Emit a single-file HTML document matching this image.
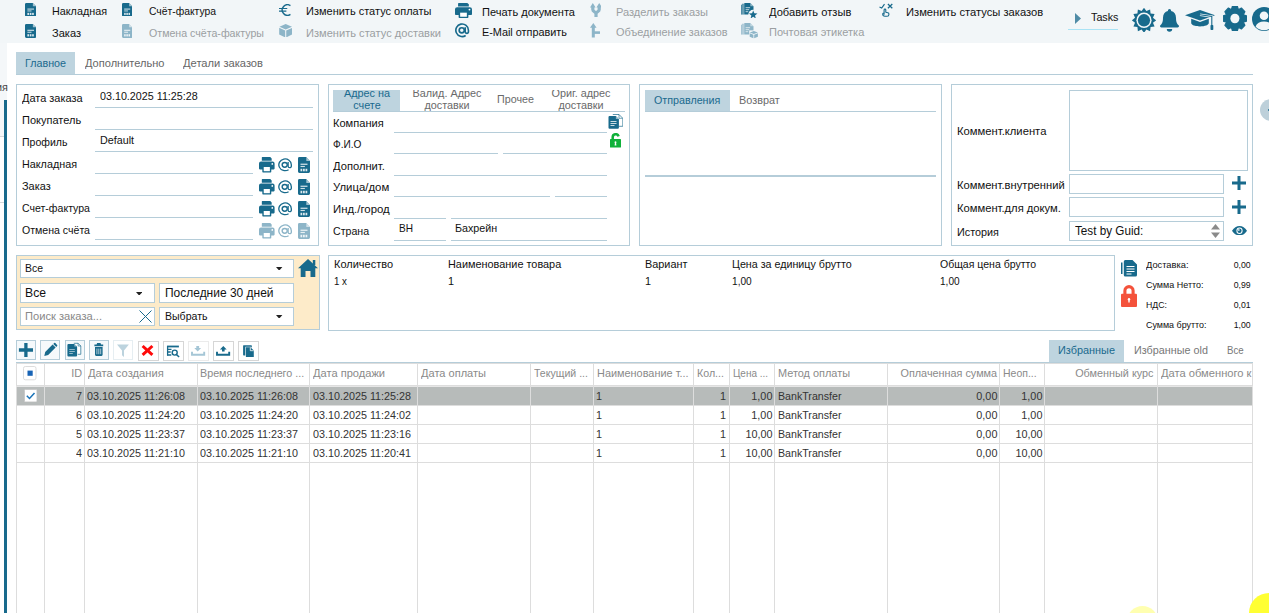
<!DOCTYPE html><html lang="ru"><head><meta charset="utf-8"><title>Заказы</title><style>
html,body{margin:0;padding:0}
body{width:1269px;height:613px;overflow:hidden;position:relative;background:#fff;font-family:"Liberation Sans",sans-serif;}
.b{position:absolute;box-sizing:border-box}
.t{position:absolute;white-space:nowrap;line-height:16px;height:16px}
.l{transform-origin:0 50%}
.r{transform-origin:100% 50%}
.c{transform-origin:50% 50%}

</style></head><body>
<div class="b" style="left:0px;top:0px;width:1269px;height:43px;background:#f2f6f8"></div>
<div class="b" style="left:0px;top:43px;width:7px;height:93px;background:#f4f7f9"></div>
<div class="b" style="left:4px;top:100px;width:3px;height:513px;background:#186a8c"></div>
<div class="b" style="left:0px;top:136px;width:4px;height:1px;background:#d4d8da"></div>
<div class="b" style="left:0px;top:202px;width:4px;height:1px;background:#d4d8da"></div>
<div class="b" style="left:1068px;top:29px;width:50px;height:1px;background:#a9e3f5"></div>
<div class="b" style="left:16px;top:52px;width:59px;height:22px;background:#bed4df"></div>
<div class="b" style="left:16px;top:74px;width:1237px;height:1px;background:#b5cdd9"></div>
<div class="b" style="left:16px;top:84px;width:303px;height:162px;border:1px solid #b5cdd9"></div>
<div class="b" style="left:95px;top:107px;width:218px;height:1px;background:#b5cdd9"></div>
<div class="b" style="left:95px;top:129px;width:218px;height:1px;background:#b5cdd9"></div>
<div class="b" style="left:95px;top:151px;width:218px;height:1px;background:#b5cdd9"></div>
<div class="b" style="left:95px;top:173px;width:157.5px;height:1px;background:#b5cdd9"></div>
<div class="b" style="left:95px;top:195px;width:157.5px;height:1px;background:#b5cdd9"></div>
<div class="b" style="left:95px;top:217px;width:157.5px;height:1px;background:#b5cdd9"></div>
<div class="b" style="left:95px;top:239px;width:157.5px;height:1px;background:#b5cdd9"></div>
<div class="b" style="left:328px;top:84px;width:302px;height:162px;border:1px solid #b5cdd9"></div>
<div class="b" style="left:333px;top:90px;width:67px;height:21px;background:#bed4df"></div>
<div class="b" style="left:333px;top:111px;width:291.5px;height:1px;background:#b5cdd9"></div>
<div class="b" style="left:333px;top:85px;width:292px;height:5px;background:#fff;z-index:5"></div>
<div class="b" style="left:394px;top:132px;width:212.5px;height:1px;background:#b5cdd9"></div>
<div class="b" style="left:394px;top:153px;width:103.5px;height:1px;background:#b5cdd9"></div>
<div class="b" style="left:503px;top:153px;width:103.5px;height:1px;background:#b5cdd9"></div>
<div class="b" style="left:394px;top:175px;width:212.5px;height:1px;background:#b5cdd9"></div>
<div class="b" style="left:394px;top:196px;width:155.6px;height:1px;background:#b5cdd9"></div>
<div class="b" style="left:555px;top:196px;width:51.5px;height:1px;background:#b5cdd9"></div>
<div class="b" style="left:394px;top:218px;width:51.6px;height:1px;background:#b5cdd9"></div>
<div class="b" style="left:451px;top:218px;width:155.5px;height:1px;background:#b5cdd9"></div>
<div class="b" style="left:394px;top:240px;width:51.6px;height:1px;background:#b5cdd9"></div>
<div class="b" style="left:451px;top:240px;width:155.5px;height:1px;background:#b5cdd9"></div>
<div class="b" style="left:639px;top:84px;width:303px;height:162px;border:1px solid #b5cdd9"></div>
<div class="b" style="left:645px;top:90px;width:85px;height:21px;background:#bed4df"></div>
<div class="b" style="left:645px;top:111px;width:291px;height:1px;background:#b5cdd9"></div>
<div class="b" style="left:645px;top:175px;width:291px;height:2px;background:#b5cdd9"></div>
<div class="b" style="left:951px;top:84px;width:302px;height:162px;border:1px solid #b5cdd9"></div>
<div class="b" style="left:1069px;top:90px;width:179px;height:81px;border:1px solid #b5cdd9;background:#fff"></div>
<div class="b" style="left:1069px;top:174px;width:155px;height:19.5px;border:1px solid #b5cdd9;background:#fff"></div>
<div class="b" style="left:1069px;top:197px;width:155px;height:19.5px;border:1px solid #b5cdd9;background:#fff"></div>
<div class="b" style="left:1069px;top:221px;width:155px;height:19.5px;border:1px solid #b5cdd9;background:#fff"></div>
<div class="b" style="left:1260px;top:99px;width:22px;height:22px;background:#bdd0da;border-radius:11px"></div>
<div class="b" style="left:16px;top:255px;width:304px;height:75px;background:#fdebc9;border:1px solid #b5cdd9"></div>
<div class="b" style="left:20px;top:259px;width:274px;height:19px;border:1px solid #b5cdd9;background:#fff"></div>
<div class="b" style="left:20px;top:283px;width:135px;height:19.5px;border:1px solid #b5cdd9;background:#fff"></div>
<div class="b" style="left:159px;top:283px;width:135px;height:19.5px;border:1px solid #b5cdd9;background:#fff"></div>
<div class="b" style="left:20px;top:306.5px;width:135px;height:19px;border:1px solid #b5cdd9;background:#fff"></div>
<div class="b" style="left:159px;top:306.5px;width:135px;height:19px;border:1px solid #b5cdd9;background:#fff"></div>
<div class="b" style="left:328px;top:255px;width:787px;height:75.5px;border:1px solid #b5cdd9"></div>
<div class="b" style="left:1049px;top:340px;width:75px;height:22px;background:#bed4df"></div>
<div class="b" style="left:16px;top:362px;width:1237px;height:1px;background:#b5cdd9"></div>
<div class="b" style="left:16px;top:340px;width:20px;height:20px;border:1px solid #b5cdd9;background:#f5f9fb"></div>
<div class="b" style="left:40px;top:340px;width:20px;height:20px;border:1px solid #b5cdd9;background:#f5f9fb"></div>
<div class="b" style="left:65px;top:340px;width:20px;height:20px;border:1px solid #b5cdd9;background:#f5f9fb"></div>
<div class="b" style="left:89px;top:340px;width:20px;height:20px;border:1px solid #b5cdd9;background:#f5f9fb"></div>
<div class="b" style="left:113px;top:340px;width:20px;height:20px;border:1px solid #e6eef2;background:#fff"></div>
<div class="b" style="left:138px;top:341px;width:20.5px;height:19.5px;border:1px solid #d6d6d6;background:#fff"></div>
<div class="b" style="left:163px;top:341px;width:20.5px;height:19.5px;border:1px solid #d6d6d6;background:#fff"></div>
<div class="b" style="left:188px;top:341px;width:20.5px;height:19.5px;border:1px solid #ebebeb;background:#fff"></div>
<div class="b" style="left:213px;top:341px;width:20.5px;height:19.5px;border:1px solid #d6d6d6;background:#fff"></div>
<div class="b" style="left:238px;top:341px;width:20.5px;height:19.5px;border:1px solid #d6d6d6;background:#fff"></div>
<div class="b" style="left:16px;top:363px;width:1237px;height:250px;border-left:1px solid #dddddd;border-right:1px solid #dddddd;border-top:1px solid #dddddd"></div>
<div class="b" style="left:16px;top:385px;width:1237px;height:1px;background:#dddddd"></div>
<div class="b" style="left:16px;top:386px;width:1237px;height:1px;background:#e6e6e6"></div>
<div class="b" style="left:17px;top:387px;width:1235px;height:18px;background:#b7bbba"></div>
<div class="b" style="left:16px;top:405px;width:1237px;height:1px;background:#dddddd"></div>
<div class="b" style="left:16px;top:424px;width:1237px;height:1px;background:#dddddd"></div>
<div class="b" style="left:16px;top:443px;width:1237px;height:1px;background:#dddddd"></div>
<div class="b" style="left:16px;top:462px;width:1237px;height:1px;background:#dddddd"></div>
<div class="b" style="left:44px;top:364px;width:1px;height:249px;background:#dddddd"></div>
<div class="b" style="left:84px;top:364px;width:1px;height:249px;background:#dddddd"></div>
<div class="b" style="left:197px;top:364px;width:1px;height:249px;background:#dddddd"></div>
<div class="b" style="left:309px;top:364px;width:1px;height:249px;background:#dddddd"></div>
<div class="b" style="left:417px;top:364px;width:1px;height:249px;background:#dddddd"></div>
<div class="b" style="left:530px;top:364px;width:1px;height:249px;background:#dddddd"></div>
<div class="b" style="left:593px;top:364px;width:1px;height:249px;background:#dddddd"></div>
<div class="b" style="left:693px;top:364px;width:1px;height:249px;background:#dddddd"></div>
<div class="b" style="left:729px;top:364px;width:1px;height:249px;background:#dddddd"></div>
<div class="b" style="left:774px;top:364px;width:1px;height:249px;background:#dddddd"></div>
<div class="b" style="left:887px;top:364px;width:1px;height:249px;background:#dddddd"></div>
<div class="b" style="left:999px;top:364px;width:1px;height:249px;background:#dddddd"></div>
<div class="b" style="left:1044px;top:364px;width:1px;height:249px;background:#dddddd"></div>
<div class="b" style="left:1157px;top:364px;width:1px;height:249px;background:#dddddd"></div>
<div class="b" style="left:1160px;top:365px;width:92px;height:19px;overflow:hidden"></div>
<div class="b" style="left:1249px;top:593px;width:40px;height:40px;background:#ffff33;border-radius:50%"></div>
<div class="b" style="left:1126.5px;top:605.5px;width:31px;height:31px;background:#ffffb0;border-radius:50%"></div>
<svg class="b" style="left:24.8px;top:2.8px" width="11.4" height="13.4" viewBox="0 0 11 14" preserveAspectRatio="none"><path d="M1.3 0h6.3l3.4 3.4v9.3a1.3 1.3 0 0 1-1.3 1.3h-8.4a1.3 1.3 0 0 1-1.3-1.3v-11.4a1.3 1.3 0 0 1 1.3-1.3z" fill="#186a8c"/><path d="M7.6 0v3.4h3.4z" fill="#fff" opacity=".6"/><rect x="2.3" y="5.8" width="6.4" height="1.1" fill="#fff" opacity=".8"/><rect x="2.3" y="7.8" width="4" height="1" fill="#fff" opacity=".8"/><rect x="2.3" y="10.3" width="1.6" height="2.2" fill="#fff" opacity=".85"/><rect x="4.6" y="10.3" width="1.6" height="2.2" fill="#fff" opacity=".85"/><rect x="6.9" y="10.3" width="1.6" height="2.2" fill="#fff" opacity=".85"/></svg>
<svg class="b" style="left:24.8px;top:23.8px" width="11.4" height="13.9" viewBox="0 0 11 14" preserveAspectRatio="none"><path d="M1.3 0h6.3l3.4 3.4v9.3a1.3 1.3 0 0 1-1.3 1.3h-8.4a1.3 1.3 0 0 1-1.3-1.3v-11.4a1.3 1.3 0 0 1 1.3-1.3z" fill="#186a8c"/><path d="M7.6 0v3.4h3.4z" fill="#fff" opacity=".6"/><rect x="2.3" y="5.8" width="6.4" height="1.1" fill="#fff" opacity=".8"/><rect x="2.3" y="7.8" width="4" height="1" fill="#fff" opacity=".8"/><rect x="2.3" y="10.3" width="1.6" height="2.2" fill="#fff" opacity=".85"/><rect x="4.6" y="10.3" width="1.6" height="2.2" fill="#fff" opacity=".85"/><rect x="6.9" y="10.3" width="1.6" height="2.2" fill="#fff" opacity=".85"/></svg>
<svg class="b" style="left:122px;top:2.8px" width="10.4" height="13.4" viewBox="0 0 11 14" preserveAspectRatio="none"><path d="M1.3 0h6.3l3.4 3.4v9.3a1.3 1.3 0 0 1-1.3 1.3h-8.4a1.3 1.3 0 0 1-1.3-1.3v-11.4a1.3 1.3 0 0 1 1.3-1.3z" fill="#186a8c"/><path d="M7.6 0v3.4h3.4z" fill="#fff" opacity=".6"/><rect x="2.3" y="5.8" width="6.4" height="1.1" fill="#fff" opacity=".8"/><rect x="2.3" y="7.8" width="4" height="1" fill="#fff" opacity=".8"/><rect x="2.3" y="10.3" width="1.6" height="2.2" fill="#fff" opacity=".85"/><rect x="4.6" y="10.3" width="1.6" height="2.2" fill="#fff" opacity=".85"/><rect x="6.9" y="10.3" width="1.6" height="2.2" fill="#fff" opacity=".85"/></svg>
<svg class="b" style="left:122px;top:23.8px" width="10.4" height="13.9" viewBox="0 0 11 14" preserveAspectRatio="none"><path d="M1.3 0h6.3l3.4 3.4v9.3a1.3 1.3 0 0 1-1.3 1.3h-8.4a1.3 1.3 0 0 1-1.3-1.3v-11.4a1.3 1.3 0 0 1 1.3-1.3z" fill="#8db5c8"/><path d="M7.6 0v3.4h3.4z" fill="#fff" opacity=".6"/><rect x="2.3" y="5.8" width="6.4" height="1.1" fill="#fff" opacity=".8"/><rect x="2.3" y="7.8" width="4" height="1" fill="#fff" opacity=".8"/><rect x="2.3" y="10.3" width="1.6" height="2.2" fill="#fff" opacity=".85"/><rect x="4.6" y="10.3" width="1.6" height="2.2" fill="#fff" opacity=".85"/><rect x="6.9" y="10.3" width="1.6" height="2.2" fill="#fff" opacity=".85"/></svg>
<svg class="b" style="left:279px;top:4px" width="13" height="12" viewBox="0 0 15 14" preserveAspectRatio="none"><path d="M13.2 1.9A6.1 6.1 0 1 0 13.2 12.1" stroke="#186a8c" stroke-width="1.6" fill="none"/><path d="M0 5.3h9.5M0 8.3h8.5" stroke="#186a8c" stroke-width="1.3"/></svg>
<svg class="b" style="left:279px;top:24px" width="13.4" height="13.4" viewBox="0 0 15 14" preserveAspectRatio="none"><path d="M7.5 0L14.5 2.8L7.5 5.8L0.5 2.8z" fill="#8db5c8"/><path d="M0.2 4L6.9 6.9V14L0.2 11z" fill="#8db5c8"/><path d="M14.8 4L8.1 6.9V14L14.8 11z" fill="#8db5c8"/></svg>
<svg class="b" style="left:454.5px;top:3px" width="17" height="15" viewBox="0 0 15.5 15.5" preserveAspectRatio="none"><path d="M3.300 0h7.900l1.400 1.400v2.300h-9.800v-3.200a.5.5 0 0 1 .5-.5z" fill="#186a8c"/><path d="M2 4.400h11.500a2 2 0 0 1 2 2v5.200a.8.800 0 0 1-.8.800h-13.900a.8.800 0 0 1-.8-.8v-5.200a2 2 0 0 1 2-2z" fill="#186a8c"/><rect x="3.300" y="8.800" width="8.900" height="6.700" rx=".7" fill="#186a8c"/><rect x="4.700" y="10" width="6.100" height="4.200" fill="#fff"/><circle cx="13.200" cy="6.900" r=".85" fill="#fff"/></svg>
<svg class="b" style="left:455.3px;top:23.450000000000003px" width="14.3" height="14.3" viewBox="0 0 15 15" preserveAspectRatio="none"><circle cx="7.100" cy="7.700" r="2.700" stroke="#186a8c" stroke-width="1.8" fill="none"/><path d="M10.700 4.500v4.700a1.700 1.700 0 0 0 3.400 0v-1.700a6.600 6.600 0 1 0 -2.900 5.600" stroke="#186a8c" stroke-width="1.7" fill="none"/></svg>
<svg class="b" style="left:589.6px;top:3px" width="11.8" height="14.5" viewBox="0 0 11.8 14.5" ><path d="M2.8 4v2.500c0 2.300 3.200 2.300 3.200 4.500v3M9.200 4v2.500c0 2.300-3.200 2.300-3.200 4.500" stroke="#8db5c8" stroke-width="3.200" fill="none"/><path d="M2.800 0l2.800 4.400h-5.600zM9.200 0l2.800 4.400h-5.600z" fill="#8db5c8"/></svg>
<svg class="b" style="left:589.5px;top:23.2px" width="10.5" height="14.5" viewBox="0 0 10.5 14.5" ><path d="M3.300 4v10.500" stroke="#8db5c8" stroke-width="3" fill="none"/><path d="M3.300 9.600h7" stroke="#8db5c8" stroke-width="2.600" fill="none"/><path d="M3.300 0l3.300 4.800h-6.600z" fill="#8db5c8"/></svg>
<svg class="b" style="left:741px;top:3.1px" width="16.5" height="15" viewBox="0 0 16.5 15" ><rect x="0" y="1.700" width=".75" height="9.900" fill="#186a8c"/><rect x="1.350" y=".7" width="1.250" height="10.900" fill="#186a8c"/><path d="M3.800 0h5.500l3.200 3.200v8.400h-9.300v-11a.6.600 0 0 1 .6-.6z" fill="#186a8c"/><path d="M9.300 0v3.200h3.200z" fill="#f2f6f8" opacity=".55"/><path d="M4.600 4.700h4.500M4.600 6.700h3.600M4.600 8.700h2.600" stroke="#f2f6f8" stroke-width=".9" opacity=".85"/><circle cx="12.200" cy="11.700" r="4.900" fill="#f2f6f8"/><polygon points="12.20,7.40 13.32,10.36 16.48,10.51 14.01,12.49 14.85,15.54 12.20,13.80 9.55,15.54 10.39,12.49 7.92,10.51 11.08,10.36" fill="#186a8c"/></svg>
<svg class="b" style="left:741px;top:23.2px" width="17.2" height="15.5" viewBox="0 0 17.2 15.5" ><rect x="0" y="1.700" width=".75" height="9.900" fill="#8db5c8"/><rect x="1.350" y=".7" width="1.250" height="10.900" fill="#8db5c8"/><path d="M3.800 0h5.500l3.200 3.200v8.400h-9.300v-11a.6.600 0 0 1 .6-.6z" fill="#8db5c8"/><path d="M9.300 0v3.200h3.200z" fill="#f2f6f8" opacity=".55"/><path d="M4.600 4.700h4.500M4.600 6.700h3.600M4.600 8.700h2.600" stroke="#f2f6f8" stroke-width=".9" opacity=".85"/><rect x="8.200" y="7.400" width="9" height="8.100" fill="#f2f6f8"/><path d="M12.800 8l4.100 1.500-4.100 1.600-4.100-1.600z" fill="#8db5c8"/><path d="M8.700 10.300l3.700 1.500v3.500l-3.700-1.600zM16.900 10.300l-3.700 1.500v3.500l3.700-1.600z" fill="#8db5c8"/></svg>
<svg class="b" style="left:878.5px;top:2.5px" width="15" height="15" viewBox="0 0 15 15" ><path d="M.5 4l2.200 1 2.800-3.900" stroke="#186a8c" stroke-width="1.200" fill="none"/><path d="M8.900 1l4.400 4.300M13.300 1l-4.400 4.300" stroke="#186a8c" stroke-width="1.250"/><path d="M5.100 11.200v-4.300a.85.850 0 0 1 1.700 0v2.400l2.100.4a1.200 1.200 0 0 1 1 1.200v.6a1.800 1.800 0 0 1-1.800 1.800h-2.200a2.200 2.200 0 0 1-2.200-2.200c0-.9.700-1.100 1.400-.4z" stroke="#186a8c" stroke-width="1.100" fill="none" stroke-linejoin="round"/></svg>
<svg class="b" style="left:1075px;top:12.5px" width="6" height="11" viewBox="0 0 6 11" ><path d="M0 0L6 5.5L0 11z" fill="#4f8ba6"/></svg>
<svg class="b" style="left:1131.5px;top:7.7px" width="24" height="24.6" viewBox="0 0 24 24" preserveAspectRatio="none"><polygon points="12.00,-0.20 14.41,3.02 18.10,1.43 18.58,5.42 22.57,5.90 20.98,9.59 24.20,12.00 20.98,14.41 22.57,18.10 18.58,18.58 18.10,22.57 14.41,20.98 12.00,24.20 9.59,20.98 5.90,22.57 5.42,18.58 1.43,18.10 3.02,14.41 -0.20,12.00 3.02,9.59 1.43,5.90 5.42,5.42 5.90,1.43 9.59,3.02" fill="#186a8c"/><circle cx="12" cy="12" r="7.6" fill="#f2f6f8"/><circle cx="12" cy="12" r="6.100" fill="#186a8c"/></svg>
<svg class="b" style="left:1160px;top:8.5px" width="19" height="23" viewBox="0 0 19 23" ><path d="M9.5 0a1.6 1.6 0 0 1 1.6 1.6v.5c3 .7 4.9 3.3 4.9 6.6 0 4.5 1.2 6.2 2.6 7.5.3.3.4.6.4.9 0 .7-.5 1.3-1.4 1.3h-16.2c-.9 0-1.400-.6-1.400-1.300 0-.3.1-.6.4-.9 1.400-1.300 2.600-3 2.600-7.500 0-3.300 1.900-5.900 4.900-6.600v-.5a1.600 1.600 0 0 1 1.600-1.600z" fill="#186a8c"/><path d="M6.800 20h5.400a2.700 2.700 0 0 1-5.400 0z" fill="#186a8c"/></svg>
<svg class="b" style="left:1185px;top:10px" width="30" height="21" viewBox="0 0 30 21" ><path d="M15 0L30 5.2L15 10.6L0 5.200z" fill="#186a8c"/><path d="M6.200 8.800l8.800 3.200 8.800-3.200v4.200c0 1.900-3.900 3.400-8.800 3.400s-8.800-1.500-8.800-3.400z" fill="#186a8c"/><path d="M15 4.800l11.800 1.700v8.500" stroke="#f2f6f8" stroke-width="2.400" fill="none"/><path d="M15 4.800l11.800 1.700v9" stroke="#186a8c" stroke-width="1.100" fill="none"/><rect x="25.500" y="15" width="2.800" height="5" rx=".7" fill="#186a8c"/></svg>
<svg class="b" style="left:1223.2px;top:6px" width="23.8" height="25" viewBox="0 0 24.6 24.6" preserveAspectRatio="none"><polygon points="9.74,0.27 14.86,0.27 15.92,3.73 15.80,3.68 18.99,1.98 22.62,5.61 20.92,8.80 20.87,8.68 24.33,9.74 24.33,14.86 20.87,15.92 20.92,15.80 22.62,18.99 18.99,22.62 15.80,20.92 15.92,20.87 14.86,24.33 9.74,24.33 8.68,20.87 8.80,20.92 5.61,22.62 1.98,18.99 3.68,15.80 3.73,15.92 0.27,14.86 0.27,9.74 3.73,8.68 3.68,8.80 1.98,5.61 5.61,1.98 8.80,3.68 8.68,3.73" fill="#186a8c" stroke="#186a8c" stroke-width="1.200" stroke-linejoin="round"/><circle cx="12.300" cy="12.300" r="4.700" fill="#f2f6f8"/></svg>
<svg class="b" style="left:1251.5px;top:7px" width="24" height="24" viewBox="0 0 24 24" ><circle cx="12" cy="12" r="12" fill="#186a8c"/><circle cx="12" cy="8.800" r="4.300" fill="#f2f6f8"/><path d="M3.600 19.400c1.200-3.400 4.300-4.900 8.400-4.900s7.200 1.500 8.400 4.900a11 11 0 0 1-16.800 0z" fill="#f2f6f8"/></svg>
<svg class="b" style="left:259.3px;top:157.0px" width="15.6" height="15.5" viewBox="0 0 15.5 15.5" preserveAspectRatio="none"><path d="M3.300 0h7.900l1.400 1.400v2.300h-9.800v-3.200a.5.5 0 0 1 .5-.5z" fill="#186a8c"/><path d="M2 4.400h11.500a2 2 0 0 1 2 2v5.200a.8.800 0 0 1-.8.800h-13.900a.8.800 0 0 1-.8-.8v-5.200a2 2 0 0 1 2-2z" fill="#186a8c"/><rect x="3.300" y="8.800" width="8.900" height="6.700" rx=".7" fill="#186a8c"/><rect x="4.700" y="10" width="6.100" height="4.200" fill="#fff"/><circle cx="13.200" cy="6.900" r=".85" fill="#fff"/></svg>
<svg class="b" style="left:277.9px;top:158.4px" width="14.2" height="13.4" viewBox="0 0 15 15" preserveAspectRatio="none"><circle cx="7.100" cy="7.700" r="2.700" stroke="#186a8c" stroke-width="1.5" fill="none"/><path d="M10.700 4.500v4.700a1.700 1.700 0 0 0 3.400 0v-1.700a6.600 6.600 0 1 0 -2.900 5.600" stroke="#186a8c" stroke-width="1.4" fill="none"/></svg>
<svg class="b" style="left:298px;top:157.0px" width="12" height="16" viewBox="0 0 11 14" preserveAspectRatio="none"><path d="M1.3 0h6.3l3.4 3.4v9.3a1.3 1.3 0 0 1-1.3 1.3h-8.4a1.3 1.3 0 0 1-1.3-1.3v-11.4a1.3 1.3 0 0 1 1.3-1.3z" fill="#186a8c"/><path d="M7.6 0v3.4h3.4z" fill="#fff" opacity=".6"/><rect x="2.3" y="5.8" width="6.4" height="1.1" fill="#fff" opacity=".8"/><rect x="2.3" y="7.8" width="4" height="1" fill="#fff" opacity=".8"/><rect x="2.3" y="10.3" width="1.6" height="2.2" fill="#fff" opacity=".85"/><rect x="4.6" y="10.3" width="1.6" height="2.2" fill="#fff" opacity=".85"/><rect x="6.9" y="10.3" width="1.6" height="2.2" fill="#fff" opacity=".85"/></svg>
<svg class="b" style="left:259.3px;top:179.0px" width="15.6" height="15.5" viewBox="0 0 15.5 15.5" preserveAspectRatio="none"><path d="M3.300 0h7.900l1.400 1.400v2.300h-9.800v-3.200a.5.5 0 0 1 .5-.5z" fill="#186a8c"/><path d="M2 4.400h11.500a2 2 0 0 1 2 2v5.200a.8.800 0 0 1-.8.800h-13.900a.8.800 0 0 1-.8-.8v-5.200a2 2 0 0 1 2-2z" fill="#186a8c"/><rect x="3.300" y="8.800" width="8.900" height="6.700" rx=".7" fill="#186a8c"/><rect x="4.700" y="10" width="6.100" height="4.200" fill="#fff"/><circle cx="13.200" cy="6.900" r=".85" fill="#fff"/></svg>
<svg class="b" style="left:277.9px;top:180.4px" width="14.2" height="13.4" viewBox="0 0 15 15" preserveAspectRatio="none"><circle cx="7.100" cy="7.700" r="2.700" stroke="#186a8c" stroke-width="1.5" fill="none"/><path d="M10.700 4.500v4.700a1.700 1.700 0 0 0 3.400 0v-1.700a6.600 6.600 0 1 0 -2.900 5.600" stroke="#186a8c" stroke-width="1.4" fill="none"/></svg>
<svg class="b" style="left:298px;top:179.0px" width="12" height="16" viewBox="0 0 11 14" preserveAspectRatio="none"><path d="M1.3 0h6.3l3.4 3.4v9.3a1.3 1.3 0 0 1-1.3 1.3h-8.4a1.3 1.3 0 0 1-1.3-1.3v-11.4a1.3 1.3 0 0 1 1.3-1.3z" fill="#186a8c"/><path d="M7.6 0v3.4h3.4z" fill="#fff" opacity=".6"/><rect x="2.3" y="5.8" width="6.4" height="1.1" fill="#fff" opacity=".8"/><rect x="2.3" y="7.8" width="4" height="1" fill="#fff" opacity=".8"/><rect x="2.3" y="10.3" width="1.6" height="2.2" fill="#fff" opacity=".85"/><rect x="4.6" y="10.3" width="1.6" height="2.2" fill="#fff" opacity=".85"/><rect x="6.9" y="10.3" width="1.6" height="2.2" fill="#fff" opacity=".85"/></svg>
<svg class="b" style="left:259.3px;top:201.0px" width="15.6" height="15.5" viewBox="0 0 15.5 15.5" preserveAspectRatio="none"><path d="M3.300 0h7.900l1.400 1.400v2.300h-9.800v-3.200a.5.5 0 0 1 .5-.5z" fill="#186a8c"/><path d="M2 4.400h11.500a2 2 0 0 1 2 2v5.200a.8.800 0 0 1-.8.800h-13.900a.8.800 0 0 1-.8-.8v-5.200a2 2 0 0 1 2-2z" fill="#186a8c"/><rect x="3.300" y="8.800" width="8.900" height="6.700" rx=".7" fill="#186a8c"/><rect x="4.700" y="10" width="6.100" height="4.200" fill="#fff"/><circle cx="13.200" cy="6.900" r=".85" fill="#fff"/></svg>
<svg class="b" style="left:277.9px;top:202.4px" width="14.2" height="13.4" viewBox="0 0 15 15" preserveAspectRatio="none"><circle cx="7.100" cy="7.700" r="2.700" stroke="#186a8c" stroke-width="1.5" fill="none"/><path d="M10.700 4.500v4.700a1.700 1.700 0 0 0 3.400 0v-1.700a6.600 6.600 0 1 0 -2.900 5.600" stroke="#186a8c" stroke-width="1.4" fill="none"/></svg>
<svg class="b" style="left:298px;top:201.0px" width="12" height="16" viewBox="0 0 11 14" preserveAspectRatio="none"><path d="M1.3 0h6.3l3.4 3.4v9.3a1.3 1.3 0 0 1-1.3 1.3h-8.4a1.3 1.3 0 0 1-1.3-1.3v-11.4a1.3 1.3 0 0 1 1.3-1.3z" fill="#186a8c"/><path d="M7.6 0v3.4h3.4z" fill="#fff" opacity=".6"/><rect x="2.3" y="5.8" width="6.4" height="1.1" fill="#fff" opacity=".8"/><rect x="2.3" y="7.8" width="4" height="1" fill="#fff" opacity=".8"/><rect x="2.3" y="10.3" width="1.6" height="2.2" fill="#fff" opacity=".85"/><rect x="4.6" y="10.3" width="1.6" height="2.2" fill="#fff" opacity=".85"/><rect x="6.9" y="10.3" width="1.6" height="2.2" fill="#fff" opacity=".85"/></svg>
<svg class="b" style="left:259.3px;top:223.0px" width="15.6" height="15.5" viewBox="0 0 15.5 15.5" preserveAspectRatio="none"><path d="M3.300 0h7.900l1.400 1.400v2.300h-9.800v-3.200a.5.5 0 0 1 .5-.5z" fill="#8db5c8"/><path d="M2 4.400h11.500a2 2 0 0 1 2 2v5.200a.8.800 0 0 1-.8.800h-13.900a.8.800 0 0 1-.8-.8v-5.200a2 2 0 0 1 2-2z" fill="#8db5c8"/><rect x="3.300" y="8.800" width="8.900" height="6.700" rx=".7" fill="#8db5c8"/><rect x="4.700" y="10" width="6.100" height="4.200" fill="#fff"/><circle cx="13.200" cy="6.900" r=".85" fill="#fff"/></svg>
<svg class="b" style="left:277.9px;top:224.4px" width="14.2" height="13.4" viewBox="0 0 15 15" preserveAspectRatio="none"><circle cx="7.100" cy="7.700" r="2.700" stroke="#8db5c8" stroke-width="1.5" fill="none"/><path d="M10.700 4.500v4.700a1.700 1.700 0 0 0 3.400 0v-1.700a6.600 6.600 0 1 0 -2.900 5.600" stroke="#8db5c8" stroke-width="1.4" fill="none"/></svg>
<svg class="b" style="left:298px;top:223.0px" width="12" height="16" viewBox="0 0 11 14" preserveAspectRatio="none"><path d="M1.3 0h6.3l3.4 3.4v9.3a1.3 1.3 0 0 1-1.3 1.3h-8.4a1.3 1.3 0 0 1-1.3-1.3v-11.4a1.3 1.3 0 0 1 1.3-1.3z" fill="#8db5c8"/><path d="M7.6 0v3.4h3.4z" fill="#fff" opacity=".6"/><rect x="2.3" y="5.8" width="6.4" height="1.1" fill="#fff" opacity=".8"/><rect x="2.3" y="7.8" width="4" height="1" fill="#fff" opacity=".8"/><rect x="2.3" y="10.3" width="1.6" height="2.2" fill="#fff" opacity=".85"/><rect x="4.6" y="10.3" width="1.6" height="2.2" fill="#fff" opacity=".85"/><rect x="6.9" y="10.3" width="1.6" height="2.2" fill="#fff" opacity=".85"/></svg>
<svg class="b" style="left:607.6px;top:113.8px" width="15.5" height="15" viewBox="0 0 15.5 15" ><path d="M4.800 .5h6.200l3.800 3.800v8h-4" stroke="#186a8c" stroke-width=".7" fill="#fff"/><path d="M11 .5v3.800h3.800" stroke="#186a8c" stroke-width=".6" fill="none"/><path d="M1.600 1.900h6.300l3 3v8.800a1.100 1.100 0 0 1-1.100 1.100h-8.200a1.100 1.100 0 0 1-1.100-1.100v-10.700a1.100 1.100 0 0 1 1.100-1.100z" fill="#186a8c"/><path d="M7.900 1.900v3h3z" fill="#fff" opacity=".5"/><path d="M2.500 7.500h6M2.500 9.500h6M2.500 11.500h4" stroke="#fff" stroke-width=".9" opacity=".85"/></svg>
<svg class="b" style="left:609.9px;top:133.2px" width="11" height="14.6" viewBox="0 0 11 14.6" ><path d="M2.700 7v-2.800a3 3 0 0 1 5.900-.8" stroke="#10b13a" stroke-width="2.500" fill="none"/><rect x="0" y="6" width="11" height="8.600" rx=".6" fill="#10b13a"/><path d="M5.500 8.200a1 1 0 0 1 .6 1.800l.3 2.500h-1.800l.3-2.500a1 1 0 0 1 .6-1.800z" fill="#fff"/></svg>
<svg class="b" style="left:1232px;top:176.3px" width="14" height="14" viewBox="0 0 14 14" ><path d="M7.0 0V14M0 7.0H14" stroke="#186a8c" stroke-width="3" fill="none"/></svg>
<svg class="b" style="left:1232px;top:199.5px" width="14" height="14" viewBox="0 0 14 14" ><path d="M7.0 0V14M0 7.0H14" stroke="#186a8c" stroke-width="3" fill="none"/></svg>
<svg class="b" style="left:1232px;top:225.8px" width="15" height="9.4" viewBox="0 0 15 9" preserveAspectRatio="none"><path d="M0 4.500C2 1.500 4.500 0 7.500 0S13 1.500 15 4.500C13 7.500 10.500 9 7.500 9S2 7.500 0 4.500z" fill="#186a8c"/><circle cx="7.500" cy="4.500" r="3.100" fill="#fff"/><circle cx="7.500" cy="4.500" r="2.100" fill="#186a8c"/><circle cx="6.800" cy="3.800" r=".9" fill="#fff" opacity=".8"/></svg>
<svg class="b" style="left:1211px;top:224px" width="9" height="14" viewBox="0 0 9 14" ><path d="M4.500 0L9 5.500H0z" fill="#8a8a8a"/><path d="M4.500 14L9 8.500H0z" fill="#8a8a8a"/></svg>
<svg class="b" style="left:1267.5px;top:105px" width="6" height="10" viewBox="0 0 6 10" ><path d="M0 5h3" stroke="#186a8c" stroke-width="1.500"/></svg>
<svg class="b" style="left:297.5px;top:258.5px" width="20" height="18" viewBox="0 0 20 18" ><path d="M10 0L20 9.300h-2.700v8.700h-4.800v-6h-5v6h-4.800v-8.700h-2.700z" fill="#186a8c"/><rect x="14.800" y="1" width="2.500" height="5" fill="#186a8c"/></svg>
<svg class="b" style="left:276.3px;top:266.5px" width="6.4" height="3.6" viewBox="0 0 6.4 3.6" ><path d="M0 0h6.400L3.200 3.600z" fill="#222"/></svg>
<svg class="b" style="left:135.8px;top:291.5px" width="6.4" height="3.6" viewBox="0 0 6.4 3.6" ><path d="M0 0h6.400L3.200 3.600z" fill="#222"/></svg>
<svg class="b" style="left:276.3px;top:314.5px" width="6.4" height="3.6" viewBox="0 0 6.4 3.6" ><path d="M0 0h6.400L3.200 3.600z" fill="#222"/></svg>
<svg class="b" style="left:138.5px;top:309.5px" width="13" height="13" viewBox="0 0 13 13" ><path d="M0.500 0.500L12.500 12.500M12.500 0.500L0.500 12.500" stroke="#186a8c" stroke-width="1"/></svg>
<svg class="b" style="left:1121px;top:260px" width="16" height="16.5" viewBox="0 0 16 16.5" ><rect x="0" y="2.500" width="1.500" height="11.500" fill="#186a8c"/><path d="M4.300 0h7.200l4.500 4.500v10.500a1.500 1.500 0 0 1-1.500 1.500h-10.200a1.500 1.500 0 0 1-1.500-1.500v-13.500a1.500 1.500 0 0 1 1.500-1.500z" fill="#186a8c"/><path d="M5.500 6.500h8M5.500 9h8M5.500 11.500h8M5.500 14h5" stroke="#fff" stroke-width="1"/></svg>
<svg class="b" style="left:1121px;top:285px" width="16" height="22" viewBox="0 0 16 22" ><path d="M3.900 10v-4.300a4.100 4.100 0 0 1 8.200 0v4.300" stroke="#f4523b" stroke-width="3.100" fill="none"/><rect x="0" y="8.700" width="16" height="13.300" rx="1" fill="#f4523b"/><circle cx="8" cy="14.300" r="1.200" fill="#fff"/><rect x="7.300" y="14.300" width="1.400" height="3.200" fill="#fff"/></svg>
<svg class="b" style="left:16px;top:340px" width="20" height="20" viewBox="0 0 20 20" ><path d="M9.900 3.100v13.800M2.900 10h14.100" stroke="#186a8c" stroke-width="3.300"/></svg>
<svg class="b" style="left:40px;top:340px" width="20" height="20" viewBox="0 0 20 20" ><path d="M4.300 15.900l.9-3.900 7.400-7.400 3 3-7.400 7.400z" fill="#186a8c"/><path d="M13.300 3.900l.8-.8a.9.900 0 0 1 1.200 0l1.800 1.800a.9.900 0 0 1 0 1.200l-.8.800z" fill="#186a8c"/></svg>
<svg class="b" style="left:65px;top:340px" width="20" height="20" viewBox="0 0 20 20" ><path d="M8.800 3.300h4.300l2.700 2.700v8.300h-3" stroke="#186a8c" stroke-width=".7" fill="#fff"/><path d="M13.100 3.300v2.700h2.700" stroke="#186a8c" stroke-width=".6" fill="none"/><path d="M3.400 3.900h6l2.700 2.700v8.800a1 1 0 0 1-1 1h-7.700a1 1 0 0 1-1-1v-10.500a1 1 0 0 1 1-1z" fill="#186a8c"/><path d="M9.400 3.900v2.700h2.700z" fill="#fff" opacity=".55"/><path d="M4.300 9.500h5.500M4.300 11.500h5.500M4.300 13.500h3.500" stroke="#fff" stroke-width=".9" opacity=".6"/></svg>
<svg class="b" style="left:89px;top:340px" width="20" height="20" viewBox="0 0 20 20" ><path d="M8.100 2.900h3.400l.5 1.700h2.200v1.600h-8.800v-1.600h2.200z" fill="#186a8c"/><path d="M6 7.100h7.600v7.700a1.100 1.100 0 0 1-1.100 1.100h-5.400a1.100 1.100 0 0 1-1.100-1.100z" fill="#186a8c"/><path d="M7.900 8.600v5.600M9.800 8.600v5.600M11.700 8.600v5.600" stroke="#fff" stroke-width=".8" opacity=".8"/></svg>
<svg class="b" style="left:113px;top:340px" width="20" height="20" viewBox="0 0 20 20" ><path d="M4 4.600h11.900l-4.900 6v6.300l-2-1.700v-4.600z" fill="#bcd3de"/></svg>
<svg class="b" style="left:138px;top:341px" width="20.5" height="19.5" viewBox="0 0 20.5 19.5" ><path d="M4.600 5l9.800 8.800M14.400 5l-9.800 8.800" stroke="#ff0a0a" stroke-width="3"/></svg>
<svg class="b" style="left:163px;top:341px" width="20.5" height="19.5" viewBox="0 0 20.5 19.5" ><path d="M4 5.500h11.900" stroke="#186a8c" stroke-width="1.800"/><path d="M4.600 5v9.700" stroke="#186a8c" stroke-width="1.300"/><path d="M4.300 8.300h4.200M4.300 11h3.400M4.300 14h4" stroke="#186a8c" stroke-width="1.300"/><circle cx="11.700" cy="11.600" r="2.500" stroke="#186a8c" stroke-width="1.400" fill="none"/><path d="M13.400 13.500l2.700 2.500" stroke="#186a8c" stroke-width="1.500"/></svg>
<svg class="b" style="left:188px;top:341px" width="20.5" height="19.5" viewBox="0 0 20.5 19.5" ><path d="M9.700 10.400l3.400-3.400h-2v-2h-2.800v2h-2z" fill="#a5c6d6"/><path d="M4 10.800v3h12.200v-3" stroke="#a5c6d6" stroke-width="1.900" fill="none"/></svg>
<svg class="b" style="left:213px;top:341px" width="20.5" height="19.5" viewBox="0 0 20.5 19.5" ><path d="M10.300 4.900l3.400 3.700h-2.100v1.900h-2.600v-1.900h-2.100z" fill="#186a8c"/><path d="M4 10.800v3h12.200v-3" stroke="#186a8c" stroke-width="1.900" fill="none"/></svg>
<svg class="b" style="left:238px;top:341px" width="20.5" height="19.5" viewBox="0 0 20.5 19.5" ><rect x="5.100" y="4.200" width="8.700" height="10.200" rx=".6" fill="#186a8c"/><path d="M7.300 5.700h5.600l3.500 3.500v7.200h-9.100z" fill="#fff"/><path d="M7.900 6.300h4.600l3.300 3.300v6.300h-7.900z" fill="#186a8c"/><path d="M12.300 6.500v3.200h3.300" stroke="#fff" stroke-width=".8" fill="none"/></svg>
<svg class="b" style="left:23.3px;top:366.3px" width="13.5" height="14.3" viewBox="0 0 13.5 14.3" ><rect x=".5" y=".5" width="12.500" height="13.300" rx="1.800" fill="#fff" stroke="#dcdcdc"/><rect x="4.500" y="4.600" width="5.200" height="5.200" fill="#1763b5"/></svg>
<svg class="b" style="left:23.5px;top:388.5px" width="13.5" height="13.5" viewBox="0 0 13.5 13.5" ><rect x=".5" y=".5" width="12.500" height="12.500" rx="1" fill="#fff" stroke="#c9c9c9"/><path d="M2.800 6.800l2.700 2.700 5-5.500" stroke="#1a73b8" stroke-width="1.500" fill="none"/></svg>
<span class="t l" style="top:79.26px;font-size:11px;color:#444;left:-4.5px;transform:scaleX(0.9850);">ия</span>
<span class="t l" style="top:2.86px;font-size:11px;color:#111;left:52px;transform:scaleX(0.9802);">Накладная</span>
<span class="t l" style="top:24.56px;font-size:11px;color:#111;left:52px;transform:scaleX(1.0049);">Заказ</span>
<span class="t l" style="top:2.86px;font-size:11px;color:#111;left:149px;transform:scaleX(0.9404);">Счёт-фактура</span>
<span class="t l" style="top:24.56px;font-size:11px;color:#9b9fa2;left:149px;transform:scaleX(0.9655);">Отмена счёта-фактуры</span>
<span class="t l" style="top:2.86px;font-size:11px;color:#111;left:306px;">Изменить статус оплаты</span>
<span class="t l" style="top:24.56px;font-size:11px;color:#9b9fa2;left:306px;transform:scaleX(1.0079);">Изменить статус доставки</span>
<span class="t l" style="top:3.56px;font-size:11px;color:#111;left:482px;transform:scaleX(1.0029);">Печать документа</span>
<span class="t l" style="top:23.86px;font-size:11px;color:#111;left:482px;transform:scaleX(0.9873);">E-Mail отправить</span>
<span class="t l" style="top:3.66px;font-size:11px;color:#9b9fa2;left:616px;transform:scaleX(1.0055);">Разделить заказы</span>
<span class="t l" style="top:23.56px;font-size:11px;color:#9b9fa2;left:616px;transform:scaleX(0.9921);">Объединение заказов</span>
<span class="t l" style="top:3.56px;font-size:11px;color:#111;left:768.7px;transform:scaleX(1.0112);">Добавить отзыв</span>
<span class="t l" style="top:23.76px;font-size:11px;color:#9b9fa2;left:768.7px;transform:scaleX(1.0046);">Почтовая этикетка</span>
<span class="t l" style="top:4.06px;font-size:11px;color:#111;left:905.5px;transform:scaleX(1.0158);">Изменить статусы заказов</span>
<span class="t l" style="top:8.86px;font-size:11px;color:#111;left:1090.5px;transform:scaleX(0.9778);">Tasks</span>
<span class="t l" style="top:54.86px;font-size:11px;color:#1a6a8e;left:25px;transform:scaleX(0.9755);">Главное</span>
<span class="t l" style="top:54.86px;font-size:11px;color:#666;left:84.5px;transform:scaleX(1.0041);">Дополнительно</span>
<span class="t l" style="top:54.86px;font-size:11px;color:#666;left:183px;transform:scaleX(1.0133);">Детали заказов</span>
<span class="t l" style="top:89.76px;font-size:11px;color:#111;left:22px;transform:scaleX(0.9968);">Дата заказа</span>
<span class="t l" style="top:111.76px;font-size:11px;color:#111;left:22px;">Покупатель</span>
<span class="t l" style="top:133.76px;font-size:11px;color:#111;left:22px;transform:scaleX(0.9558);">Профиль</span>
<span class="t l" style="top:155.76px;font-size:11px;color:#111;left:22px;transform:scaleX(0.9802);">Накладная</span>
<span class="t l" style="top:177.76px;font-size:11px;color:#111;left:22px;transform:scaleX(0.9945);">Заказ</span>
<span class="t l" style="top:199.76px;font-size:11px;color:#111;left:22px;transform:scaleX(0.9592);">Счет-фактура</span>
<span class="t l" style="top:221.76px;font-size:11px;color:#111;left:22px;transform:scaleX(0.9607);">Отмена счёта</span>
<span class="t l" style="top:87.76px;font-size:11px;color:#111;left:100px;transform:scaleX(0.9758);">03.10.2025 11:25:28</span>
<span class="t l" style="top:131.96px;font-size:11px;color:#111;left:100px;transform:scaleX(0.9753);">Default</span>
<span class="t c" style="top:84.76px;font-size:11px;color:#1a6a8e;left:166.5px;width:400px;text-align:center;transform:scaleX(0.9850);">Адрес на</span>
<span class="t c" style="top:96.56px;font-size:11px;color:#1a6a8e;left:166.5px;width:400px;text-align:center;transform:scaleX(0.9850);">счете</span>
<span class="t c" style="top:84.76px;font-size:11px;color:#6a6a6a;left:247px;width:400px;text-align:center;transform:scaleX(0.9850);">Валид. Адрес</span>
<span class="t c" style="top:96.56px;font-size:11px;color:#6a6a6a;left:247px;width:400px;text-align:center;transform:scaleX(0.9850);">доставки</span>
<span class="t l" style="top:91.26px;font-size:11px;color:#6a6a6a;left:496.6px;transform:scaleX(0.9743);">Прочее</span>
<span class="t c" style="top:84.76px;font-size:11px;color:#6a6a6a;left:380.70000000000005px;width:400px;text-align:center;transform:scaleX(0.9850);">Ориг. адрес</span>
<span class="t c" style="top:96.56px;font-size:11px;color:#6a6a6a;left:380.70000000000005px;width:400px;text-align:center;transform:scaleX(0.9850);">доставки</span>
<span class="t l" style="top:114.56px;font-size:11px;color:#111;left:333.3px;transform:scaleX(1.0071);">Компания</span>
<span class="t l" style="top:136.16px;font-size:11px;color:#111;left:333.3px;transform:scaleX(0.9180);">Ф.И.О</span>
<span class="t l" style="top:157.76px;font-size:11px;color:#111;left:333.3px;transform:scaleX(1.0148);">Дополнит.</span>
<span class="t l" style="top:179.36px;font-size:11px;color:#111;left:333.3px;transform:scaleX(1.0333);">Улица/дом</span>
<span class="t l" style="top:200.96px;font-size:11px;color:#111;left:333.3px;transform:scaleX(1.0344);">Инд./город</span>
<span class="t l" style="top:222.56px;font-size:11px;color:#111;left:333.3px;transform:scaleX(0.9647);">Страна</span>
<span class="t l" style="top:219.76px;font-size:11px;color:#111;left:399px;transform:scaleX(0.9162);">BH</span>
<span class="t l" style="top:219.76px;font-size:11px;color:#111;left:455.3px;transform:scaleX(0.9747);">Бахрейн</span>
<span class="t l" style="top:92.06px;font-size:11px;color:#1a6a8e;left:654.4px;transform:scaleX(0.9737);">Отправления</span>
<span class="t l" style="top:92.06px;font-size:11px;color:#6a6a6a;left:739px;transform:scaleX(0.9867);">Возврат</span>
<span class="t l" style="top:122.56px;font-size:11px;color:#111;left:956.6px;transform:scaleX(1.0223);">Коммент.клиента</span>
<span class="t l" style="top:176.96px;font-size:11px;color:#111;left:956.6px;transform:scaleX(1.0174);">Коммент.внутренний</span>
<span class="t l" style="top:199.96px;font-size:11px;color:#111;left:956.6px;transform:scaleX(1.0182);">Коммент.для докум.</span>
<span class="t l" style="top:223.96px;font-size:11px;color:#111;left:956.6px;transform:scaleX(0.9819);">История</span>
<span class="t l" style="top:222.74px;font-size:13px;color:#111;left:1075px;transform:scaleX(0.9002);">Test by Guid:</span>
<span class="t l" style="top:259.96px;font-size:11px;color:#111;left:25px;transform:scaleX(0.9489);">Все</span>
<span class="t l" style="top:284.74px;font-size:13px;color:#111;left:25px;transform:scaleX(0.9372);">Все</span>
<span class="t l" style="top:284.74px;font-size:13px;color:#111;left:165px;transform:scaleX(0.9210);">Последние 30 дней</span>
<span class="t l" style="top:307.86px;font-size:11px;color:#888;left:25px;transform:scaleX(1.0121);">Поиск заказа...</span>
<span class="t l" style="top:308.06px;font-size:11px;color:#111;left:165px;transform:scaleX(0.9591);">Выбрать</span>
<span class="t l" style="top:255.76px;font-size:11px;color:#111;left:334px;">Количество</span>
<span class="t l" style="top:272.76px;font-size:11px;color:#111;left:334px;transform:scaleX(0.8851);">1 x</span>
<span class="t l" style="top:255.76px;font-size:11px;color:#111;left:447.8px;transform:scaleX(0.9893);">Наименование товара</span>
<span class="t l" style="top:272.76px;font-size:11px;color:#111;left:447.8px;transform:scaleX(0.9850);">1</span>
<span class="t l" style="top:255.76px;font-size:11px;color:#111;left:644.5px;transform:scaleX(0.9895);">Вариант</span>
<span class="t l" style="top:272.76px;font-size:11px;color:#111;left:644.5px;transform:scaleX(0.9850);">1</span>
<span class="t l" style="top:255.76px;font-size:11px;color:#111;left:732.3px;transform:scaleX(0.9723);">Цена за единицу брутто</span>
<span class="t l" style="top:272.76px;font-size:11px;color:#111;left:732.3px;transform:scaleX(0.9196);">1,00</span>
<span class="t l" style="top:255.76px;font-size:11px;color:#111;left:940.4px;transform:scaleX(0.9567);">Общая цена брутто</span>
<span class="t l" style="top:272.76px;font-size:11px;color:#111;left:940.4px;transform:scaleX(0.9150);">1,00</span>
<span class="t l" style="top:256.76px;font-size:9.6px;color:#111;left:1145.5px;transform:scaleX(0.9687);">Доставка:</span>
<span class="t r" style="top:256.76px;font-size:9.6px;color:#111;right:18.00px;transform:scaleX(0.9097);">0,00</span>
<span class="t l" style="top:276.96px;font-size:9.6px;color:#111;left:1145.5px;transform:scaleX(0.9359);">Сумма Нетто:</span>
<span class="t r" style="top:276.96px;font-size:9.6px;color:#111;right:18.00px;transform:scaleX(0.9097);">0,99</span>
<span class="t l" style="top:297.16px;font-size:9.6px;color:#111;left:1145.5px;transform:scaleX(0.9118);">НДС:</span>
<span class="t r" style="top:297.16px;font-size:9.6px;color:#111;right:18.00px;transform:scaleX(0.9097);">0,01</span>
<span class="t l" style="top:316.96px;font-size:9.6px;color:#111;left:1145.5px;transform:scaleX(0.9305);">Сумма брутто:</span>
<span class="t r" style="top:316.96px;font-size:9.6px;color:#111;right:18.00px;transform:scaleX(0.9097);">1,00</span>
<span class="t l" style="top:341.76px;font-size:11px;color:#1a6a8e;left:1058px;transform:scaleX(0.9905);">Избранные</span>
<span class="t l" style="top:341.76px;font-size:11px;color:#777;left:1133.7px;transform:scaleX(0.9817);">Избранные old</span>
<span class="t l" style="top:341.76px;font-size:11px;color:#777;left:1226.8px;transform:scaleX(0.8804);">Все</span>
<span class="t r" style="top:364.76px;font-size:11px;color:#8a8a8a;right:1186.70px;transform:scaleX(0.9850);">ID</span>
<span class="t l" style="top:364.76px;font-size:11px;color:#8a8a8a;left:88.2px;transform:scaleX(1.0168);">Дата создания</span>
<span class="t l" style="top:364.76px;font-size:11px;color:#8a8a8a;left:199.8px;transform:scaleX(0.9761);">Время последнего ...</span>
<span class="t l" style="top:364.76px;font-size:11px;color:#8a8a8a;left:313px;transform:scaleX(1.0083);">Дата продажи</span>
<span class="t l" style="top:364.76px;font-size:11px;color:#8a8a8a;left:421px;transform:scaleX(1.0041);">Дата оплаты</span>
<span class="t l" style="top:364.76px;font-size:11px;color:#8a8a8a;left:534px;transform:scaleX(0.9603);">Текущий ...</span>
<span class="t l" style="top:364.76px;font-size:11px;color:#8a8a8a;left:596.5px;transform:scaleX(0.9914);">Наименование т...</span>
<span class="t l" style="top:364.76px;font-size:11px;color:#8a8a8a;left:697px;transform:scaleX(0.9686);">Кол...</span>
<span class="t l" style="top:364.76px;font-size:11px;color:#8a8a8a;left:733px;transform:scaleX(0.9051);">Цена ...</span>
<span class="t l" style="top:364.76px;font-size:11px;color:#8a8a8a;left:778px;transform:scaleX(0.9914);">Метод оплаты</span>
<span class="t r" style="top:364.76px;font-size:11px;color:#8a8a8a;right:272.00px;transform:scaleX(0.9850);">Оплаченная сумма</span>
<span class="t l" style="top:364.76px;font-size:11px;color:#8a8a8a;left:1003.3px;transform:scaleX(0.9543);">Неоп...</span>
<span class="t r" style="top:364.76px;font-size:11px;color:#8a8a8a;right:115.30px;transform:scaleX(0.9850);">Обменный курс</span>
<span class="t l" style="top:364.76px;font-size:11px;color:#8a8a8a;left:1160.5px;transform:scaleX(1.0135);">Дата обменного к</span>
<span class="t r" style="top:387.56px;font-size:11px;color:#333;right:1186.70px;transform:scaleX(0.9850);">7</span>
<span class="t l" style="top:387.56px;font-size:11px;color:#333;left:87.4px;transform:scaleX(0.9788);">03.10.2025 11:26:08</span>
<span class="t l" style="top:387.56px;font-size:11px;color:#333;left:200px;transform:scaleX(0.9788);">03.10.2025 11:26:08</span>
<span class="t l" style="top:387.56px;font-size:11px;color:#333;left:312.5px;transform:scaleX(0.9788);">03.10.2025 11:25:28</span>
<span class="t l" style="top:387.56px;font-size:11px;color:#333;left:595.7px;transform:scaleX(0.9850);">1</span>
<span class="t r" style="top:387.56px;font-size:11px;color:#333;right:542.40px;transform:scaleX(0.9850);">1</span>
<span class="t r" style="top:387.56px;font-size:11px;color:#333;right:496.70px;transform:scaleX(0.9850);">1,00</span>
<span class="t l" style="top:387.56px;font-size:11px;color:#333;left:777.5px;transform:scaleX(0.9676);">BankTransfer</span>
<span class="t r" style="top:387.56px;font-size:11px;color:#333;right:272.00px;transform:scaleX(0.9850);">0,00</span>
<span class="t r" style="top:387.56px;font-size:11px;color:#333;right:226.20px;transform:scaleX(0.9850);">1,00</span>
<span class="t r" style="top:406.56px;font-size:11px;color:#333;right:1186.70px;transform:scaleX(0.9850);">6</span>
<span class="t l" style="top:406.56px;font-size:11px;color:#333;left:87.4px;transform:scaleX(0.9788);">03.10.2025 11:24:20</span>
<span class="t l" style="top:406.56px;font-size:11px;color:#333;left:200px;transform:scaleX(0.9788);">03.10.2025 11:24:20</span>
<span class="t l" style="top:406.56px;font-size:11px;color:#333;left:312.5px;transform:scaleX(0.9788);">03.10.2025 11:24:02</span>
<span class="t l" style="top:406.56px;font-size:11px;color:#333;left:595.7px;transform:scaleX(0.9850);">1</span>
<span class="t r" style="top:406.56px;font-size:11px;color:#333;right:542.40px;transform:scaleX(0.9850);">1</span>
<span class="t r" style="top:406.56px;font-size:11px;color:#333;right:496.70px;transform:scaleX(0.9850);">1,00</span>
<span class="t l" style="top:406.56px;font-size:11px;color:#333;left:777.5px;transform:scaleX(0.9676);">BankTransfer</span>
<span class="t r" style="top:406.56px;font-size:11px;color:#333;right:272.00px;transform:scaleX(0.9850);">0,00</span>
<span class="t r" style="top:406.56px;font-size:11px;color:#333;right:226.20px;transform:scaleX(0.9850);">1,00</span>
<span class="t r" style="top:425.56px;font-size:11px;color:#333;right:1186.70px;transform:scaleX(0.9850);">5</span>
<span class="t l" style="top:425.56px;font-size:11px;color:#333;left:87.4px;transform:scaleX(0.9788);">03.10.2025 11:23:37</span>
<span class="t l" style="top:425.56px;font-size:11px;color:#333;left:200px;transform:scaleX(0.9788);">03.10.2025 11:23:37</span>
<span class="t l" style="top:425.56px;font-size:11px;color:#333;left:312.5px;transform:scaleX(0.9788);">03.10.2025 11:23:16</span>
<span class="t l" style="top:425.56px;font-size:11px;color:#333;left:595.7px;transform:scaleX(0.9850);">1</span>
<span class="t r" style="top:425.56px;font-size:11px;color:#333;right:542.40px;transform:scaleX(0.9850);">1</span>
<span class="t r" style="top:425.56px;font-size:11px;color:#333;right:496.70px;transform:scaleX(0.9850);">10,00</span>
<span class="t l" style="top:425.56px;font-size:11px;color:#333;left:777.5px;transform:scaleX(0.9676);">BankTransfer</span>
<span class="t r" style="top:425.56px;font-size:11px;color:#333;right:272.00px;transform:scaleX(0.9850);">0,00</span>
<span class="t r" style="top:425.56px;font-size:11px;color:#333;right:226.20px;transform:scaleX(0.9850);">10,00</span>
<span class="t r" style="top:444.56px;font-size:11px;color:#333;right:1186.70px;transform:scaleX(0.9850);">4</span>
<span class="t l" style="top:444.56px;font-size:11px;color:#333;left:87.4px;transform:scaleX(0.9788);">03.10.2025 11:21:10</span>
<span class="t l" style="top:444.56px;font-size:11px;color:#333;left:200px;transform:scaleX(0.9788);">03.10.2025 11:21:10</span>
<span class="t l" style="top:444.56px;font-size:11px;color:#333;left:312.5px;transform:scaleX(0.9788);">03.10.2025 11:20:41</span>
<span class="t l" style="top:444.56px;font-size:11px;color:#333;left:595.7px;transform:scaleX(0.9850);">1</span>
<span class="t r" style="top:444.56px;font-size:11px;color:#333;right:542.40px;transform:scaleX(0.9850);">1</span>
<span class="t r" style="top:444.56px;font-size:11px;color:#333;right:496.70px;transform:scaleX(0.9850);">10,00</span>
<span class="t l" style="top:444.56px;font-size:11px;color:#333;left:777.5px;transform:scaleX(0.9676);">BankTransfer</span>
<span class="t r" style="top:444.56px;font-size:11px;color:#333;right:272.00px;transform:scaleX(0.9850);">0,00</span>
<span class="t r" style="top:444.56px;font-size:11px;color:#333;right:226.20px;transform:scaleX(0.9850);">10,00</span>
</body></html>
